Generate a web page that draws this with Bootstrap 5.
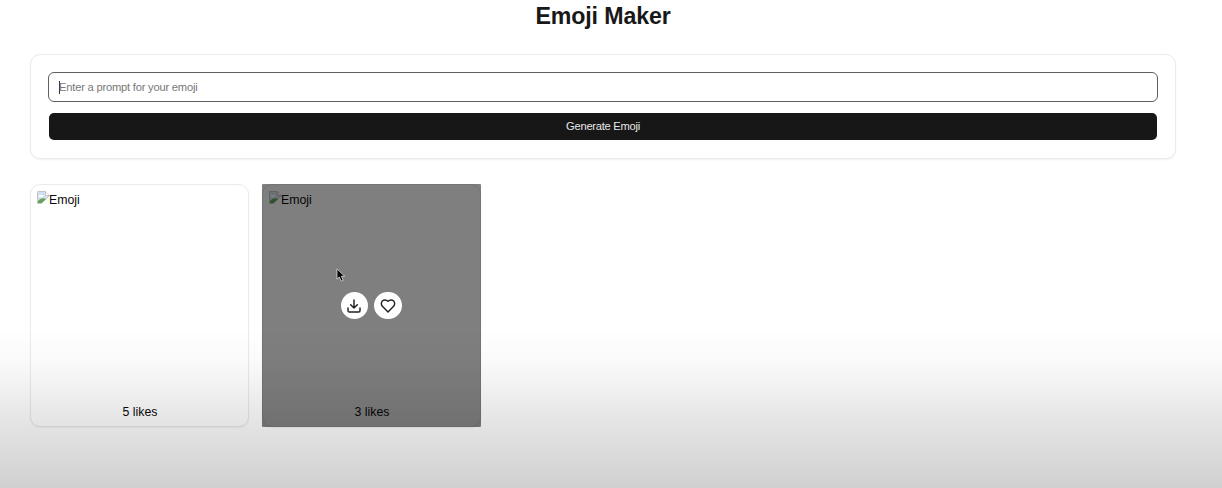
<!DOCTYPE html>
<html lang="en">
<head>
<meta charset="utf-8">
<meta name="viewport" content="width=device-width, initial-scale=1">
<title>Emoji Maker</title>
<link href="https://cdn.jsdelivr.net/npm/bootstrap@5.3.0/dist/css/bootstrap.min.css" rel="stylesheet">
<style>
  body { font-family: "Liberation Sans", Arial, sans-serif; color: #0a0a0a; height: 488px; overflow: hidden; background: #fff; }
  .page { width: 1146px; margin-left: 30px; }
  .title { font-size: 23.2px; letter-spacing: -.13px; line-height: 32px; margin-bottom: 22px; font-weight: 700; color: #181818; }
  .panel { border: 1px solid #ebebeb; border-radius: 10px; box-shadow: 0 1px 2px rgba(0,0,0,.06); background: #fff; }
  .maker { height: 105px; padding: 17px 17px 0; }
  .prompt { height: 30px; border: 1.5px solid #606060; border-radius: 6px; padding: 0 10px; font-size: 11.2px; letter-spacing: -.22px; color: #777; }
  .caret { width: 1px; height: 13px; background: #333; margin-right: -1px; }
  .generate { height: 27px; margin: 11px 1px 0; width: calc(100% - 2px); padding: 0; font-size: 11.2px; letter-spacing: -.28px; border: 0; border-radius: 5px; background: #171717; color: #e8e8e8; }
  .generate:hover { background: #222; color: #fff; }
  .gallery { margin-top: 25px; gap: 13px; }
  .tile { width: 219px; height: 243px; padding: 6px 5px 0 6px; font-size: 12.3px; line-height: 18px; position: relative; }
  .broken { width: 13px; height: 14px; margin-right: -1px; }
  .likes { height: 18px; margin-bottom: 5px; }
  .veil { inset: -1px; background: rgba(0,0,0,.5); gap: 6px; border-radius: 1px; padding: 0 1px 0 0; }
  .round-btn { width: 27.5px; height: 27.5px; border: 0; padding: 0; background: #fff; }
  .pointer { left: 74px; top: 84px; }
  .fade-bottom { height: 158px; pointer-events: none; background: linear-gradient(rgba(0,0,0,0), rgba(0,0,0,.018) 20%, rgba(0,0,0,.06) 38%, rgba(0,0,0,.115) 63%, rgba(0,0,0,.185)); }
</style>
</head>
<body>
<main class="page">
  <h1 class="title text-center">Emoji Maker</h1>
  <section class="panel maker">
    <div class="prompt d-flex align-items-center"><span class="caret"></span><span>Enter a prompt for your emoji</span></div>
    <button class="btn generate d-flex align-items-center justify-content-center" type="button">Generate Emoji</button>
  </section>
  <section class="gallery d-flex">
    <article class="panel tile d-flex flex-column justify-content-between">
      <div class="d-flex">
        <svg class="broken" viewBox="0 0 13 14"><path d="M.5.5h8l4 4-8 8h-4z" fill="#d3e0ee" stroke="#c2c6ca"/><path d="M8.500.5v4h4" fill="#fff" stroke="#c2c6ca"/><path d="M2 4h4v2H2z" fill="#fff"/><path d="M1 10q3-4 8-2l-4.500 4H1z" fill="#65a253"/></svg>
        <span>Emoji</span>
      </div>
      <div class="likes text-center">5 likes</div>
    </article>
    <article class="panel tile d-flex flex-column justify-content-between">
      <div class="d-flex">
        <svg class="broken" viewBox="0 0 13 14"><path d="M.5.5h8l4 4-8 8h-4z" fill="#d3e0ee" stroke="#c2c6ca"/><path d="M8.500.5v4h4" fill="#fff" stroke="#c2c6ca"/><path d="M2 4h4v2H2z" fill="#fff"/><path d="M1 10q3-4 8-2l-4.500 4H1z" fill="#65a253"/></svg>
        <span>Emoji</span>
      </div>
      <div class="likes text-center">3 likes</div>
      <div class="veil position-absolute d-flex align-items-center justify-content-center">
        <button class="round-btn rounded-circle d-flex align-items-center justify-content-center" type="button" aria-label="Download">
          <svg width="16" height="16" viewBox="0 0 24 24" fill="none" stroke="#222" stroke-width="2.200" stroke-linecap="round" stroke-linejoin="round"><path d="M21 15v4a2 2 0 0 1-2 2H5a2 2 0 0 1-2-2v-4M7 10l5 5 5-5M12 15V3"/></svg>
        </button>
        <button class="round-btn rounded-circle d-flex align-items-center justify-content-center" type="button" aria-label="Like">
          <svg width="16" height="16" viewBox="0 0 24 24" fill="none" stroke="#222" stroke-width="2.200" stroke-linecap="round" stroke-linejoin="round"><path d="M19 14c1.490-1.460 3-3.210 3-5.500A5.500 5.500 0 0 0 16.500 3c-1.760 0-3 .5-4.500 2-1.500-1.500-2.740-2-4.500-2A5.500 5.500 0 0 0 2 8.500c0 2.300 1.500 4.050 3 5.500l7 7Z"/></svg>
        </button>
        <svg class="pointer position-absolute" width="10" height="14" viewBox="0 0 9 13.500"><path d="M.6.8v10l2.300-2.100 1.700 4 2-.9-1.700-3.800h3.200z" fill="#050505" stroke="#ddd" stroke-width=".8"/></svg>
      </div>
    </article>
  </section>
</main>
<div class="fade-bottom position-fixed bottom-0 start-0 end-0"></div>
<script src="https://cdn.jsdelivr.net/npm/bootstrap@5.3.0/dist/js/bootstrap.bundle.min.js"></script>
</body>
</html>
